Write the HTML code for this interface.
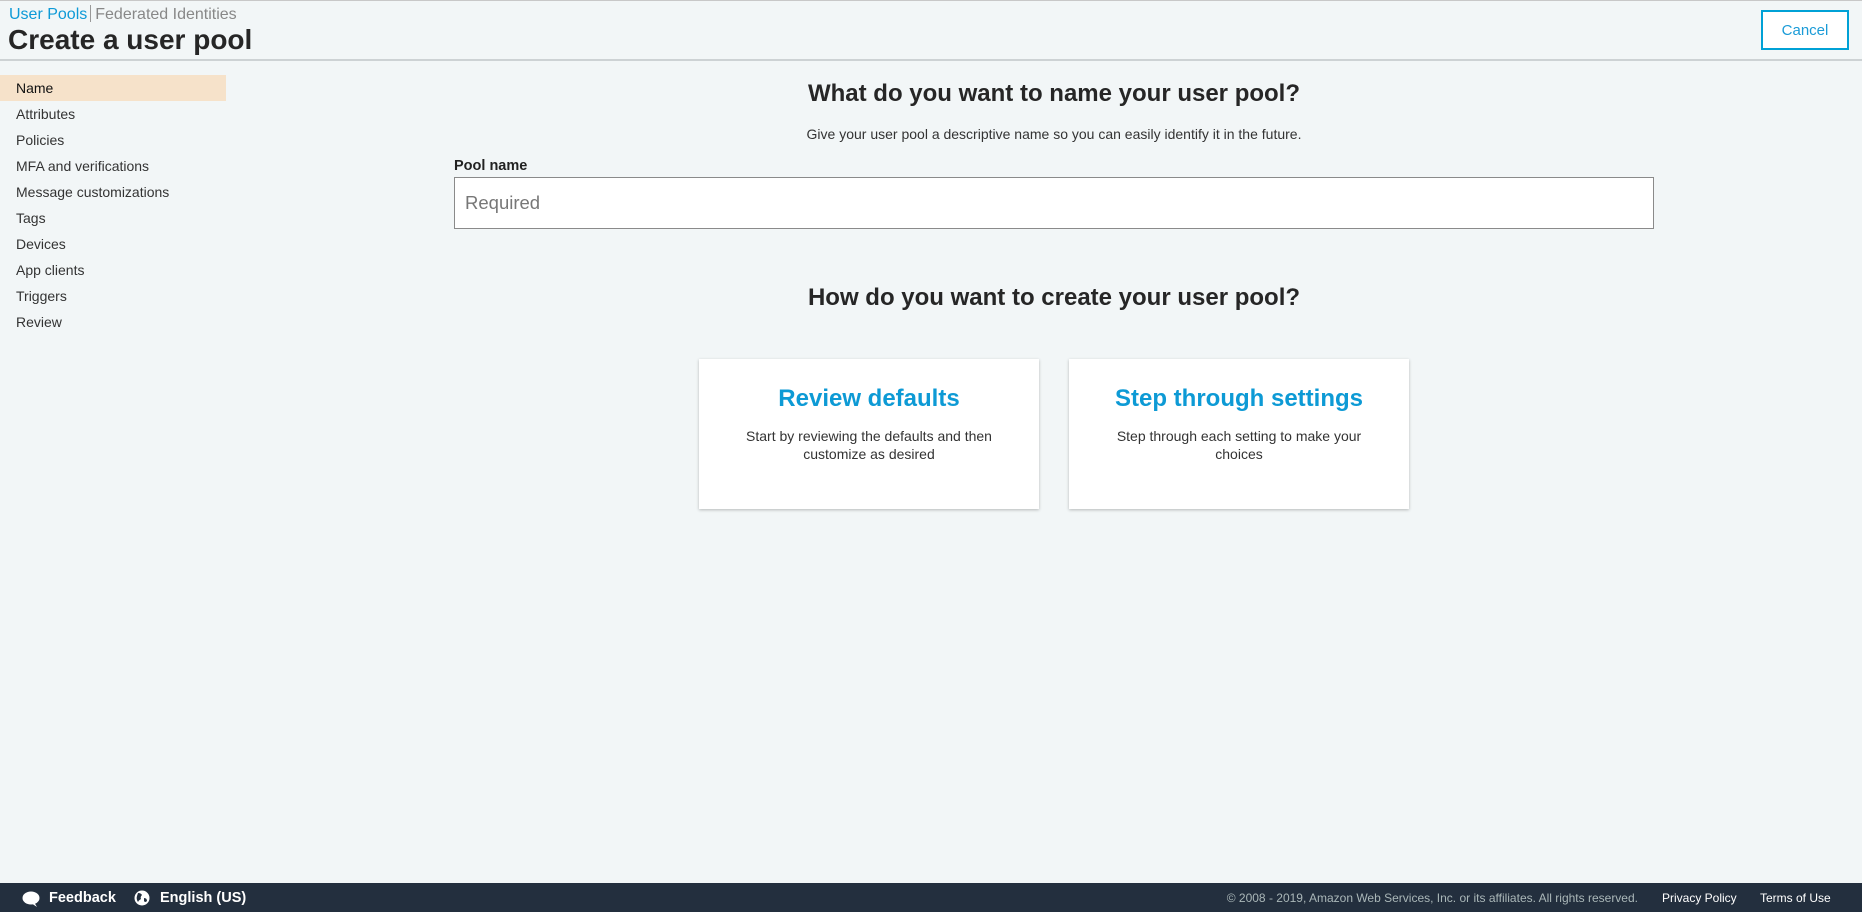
<!DOCTYPE html>
<html><head><meta charset="utf-8">
<style>
*{box-sizing:border-box;margin:0;padding:0}
html,body{width:1862px;height:912px;overflow:hidden}
body{background:#f2f6f7;font-family:"Liberation Sans",Arial,sans-serif;color:#333;position:relative}
.abs{position:absolute}
.topline{top:0;left:0;width:1862px;height:1px;background:#c8c8c8}
.crumb{left:9px;top:5px;font-size:16px;line-height:19px}
.crumb .a{color:#0e9ad7}
.crumb .sep{display:inline-block;width:1px;height:17px;background:#999;vertical-align:-3px;margin:0 4px 0 3px}
.crumb .b{color:#888}
h1{position:absolute;left:8px;top:23px;font-size:28px;font-weight:bold;color:#262626;line-height:34px}
.hline{top:59px;left:0;width:1862px;height:2px;background:#cdd2d4}
.cancel{left:1761px;top:10px;width:88px;height:40px;border:2px solid #00a1d6;background:#fff;color:#1a9bd7;font-size:15px;text-align:center;line-height:37px}
.nav{left:0;top:75px;width:226px}
.nav div{height:26px;line-height:27px;padding-left:16px;font-size:14px;color:#333}
.nav div.on{background:#f6e2ca;color:#111}
.h2{left:454px;width:1200px;text-align:center;font-size:24px;font-weight:bold;color:#262626}
.sub{left:454px;width:1200px;top:126px;text-align:center;font-size:14px;color:#333}
.label{left:454px;top:158px;font-size:14.5px;font-weight:bold;color:#222}
.input{left:454px;top:177px;width:1200px;height:52px;background:#fff;border:1px solid #8a8a8a;font-size:18.5px;color:#777;padding-left:10px;line-height:50px}
.card{top:359px;width:340px;height:150px;background:#fff;box-shadow:0 1px 3px rgba(0,0,0,.25);text-align:center}
.card .t{margin-top:26px;font-size:24px;font-weight:bold;color:#0d9ad5;line-height:28px}
.card .d{margin:14px auto 0;width:260px;font-size:14px;line-height:18px;color:#333}
.footer{left:0;top:883px;width:1862px;height:29px;background:#232f3e;color:#fff;font-size:14.5px;line-height:31px}
.footer .f{position:absolute;font-weight:bold}
.footer .r{position:absolute;font-size:12px;color:#aab7b8;right:224px}
.footer .l{position:absolute;font-size:12px;color:#fff}
</style></head><body>
<div class="abs topline"></div>
<div class="abs crumb"><span class="a">User Pools</span><span class="sep"></span><span class="b">Federated Identities</span></div>
<h1>Create a user pool</h1>
<div class="abs hline"></div>
<div class="abs cancel">Cancel</div>
<div class="abs nav">
<div class="on">Name</div><div>Attributes</div><div>Policies</div><div>MFA and verifications</div><div>Message customizations</div><div>Tags</div><div>Devices</div><div>App clients</div><div>Triggers</div><div>Review</div>
</div>
<div class="abs h2" style="top:80px">What do you want to name your user pool?</div>
<div class="abs sub">Give your user pool a descriptive name so you can easily identify it in the future.</div>
<div class="abs label">Pool name</div>
<div class="abs input">Required</div>
<div class="abs h2" style="top:284px">How do you want to create your user pool?</div>
<div class="abs card" style="left:699px"><div class="t">Review defaults</div><div class="d">Start by reviewing the defaults and then customize as desired</div></div>
<div class="abs card" style="left:1069px"><div class="t">Step through settings</div><div class="d">Step through each setting to make your choices</div></div>
<div class="abs footer">
<svg class="abs" style="left:22px;top:8px" width="18" height="17" viewBox="0 0 18 17"><ellipse cx="9" cy="7" rx="8.5" ry="6.5" fill="#fff"/><path d="M9 12 L15 16 L12 11 Z" fill="#fff"/></svg>
<span class="f" style="left:49px">Feedback</span>
<svg class="abs" style="left:134px;top:7px" width="16" height="16" viewBox="0 0 16 16"><circle cx="8" cy="8" r="7.5" fill="#fff"/><path d="M4 3 Q7 3 8 5 Q6 7 7 9 Q5 10 4 12 Q2 9 3 6 Z M10 8 Q13 8 13 11 Q11 13 10 11 Z" fill="#232f3e"/></svg>
<span class="f" style="left:160px">English (US)</span>
<span class="r">© 2008 - 2019, Amazon Web Services, Inc. or its affiliates. All rights reserved.</span>
<span class="l" style="left:1662px">Privacy Policy</span>
<span class="l" style="left:1760px">Terms of Use</span>
</div>
</body></html>
